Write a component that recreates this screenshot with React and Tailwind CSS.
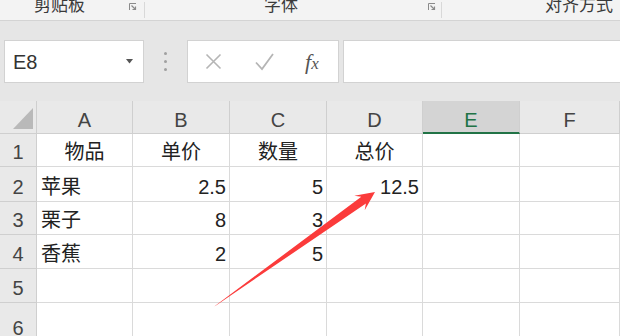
const font = "font-['Liberation_Sans','Noto_Sans_CJK_SC',sans-serif]";

const columns = ["A", "B", "C", "D", "E", "F"];
const rowHeights = ["h-[33px]", "h-[35px]", "h-[33px]", "h-[34px]", "h-[34px]", "h-[40px]"];

// [text, align] per cell
const rows = [
  [["物品", "c"], ["单价", "c"], ["数量", "c"], ["总价", "c"], null, null],
  [["苹果", "l"], ["2.5", "r"], ["5", "r"], ["12.5", "r"], null, null],
  [["栗子", "l"], ["8", "r"], ["3", "r"], null, null, null],
  [["香蕉", "l"], ["2", "r"], ["5", "r"], null, null, null],
  [null, null, null, null, null, null],
  [null, null, null, null, null, null],
];

const alignClass = { l: "justify-start pl-[4px]", c: "justify-center", r: "justify-end pr-[3px]" };

function Launcher() {
  return (
    <svg width="8" height="8" viewBox="0 0 8 8" className="text-[#8a8a8a]">
      <path d="M0.5 7V0.5H7" fill="none" stroke="currentColor" strokeWidth="1" />
      <path d="M2.5 2.5L6.5 6.5M6.5 3.5v3h-3" fill="none" stroke="currentColor" strokeWidth="1.2" />
    </svg>
  );
}

function Ribbon() {
  return (
    <div className="flex h-[21px] overflow-hidden border-b border-[#d4d4d4] bg-[#f3f3f3] text-[17px] leading-[17px] text-[#3a3a3a]">
      <div className="flex w-[144px] items-start">
        <span className="-mt-[3px] pl-[34px]">剪贴板</span>
        <span className="ml-auto mr-[7px] mt-[3px]"><Launcher /></span>
      </div>
      <div className="my-[2px] w-px bg-[#d8d8d8]" />
      <div className="flex w-[296px] items-start">
        <span className="-mt-[3px] pl-[119px]">字体</span>
        <span className="ml-auto mr-[5px] mt-[3px]"><Launcher /></span>
      </div>
      <div className="my-[2px] w-px bg-[#d8d8d8]" />
      <div className="flex flex-1 items-start">
        <span className="-mt-[3px] whitespace-nowrap pl-[103px]">对齐方式</span>
      </div>
    </div>
  );
}

function FormulaBar() {
  return (
    <div className="flex h-[80px] items-start bg-[#e6e6e6] pt-[19px]">
      <div className="ml-[4px] flex h-[43px] w-[140px] items-center border border-[#d2d2d2] bg-white pl-[8px] pr-[10px]">
        <span className="text-[20px] leading-none text-[#333]">E8</span>
        <svg width="7" height="5" viewBox="0 0 7 5" className="ml-auto">
          <path d="M0 0h7L3.5 4.5z" fill="#555" />
        </svg>
      </div>
      <div className="flex h-[43px] w-[43px] flex-col items-center justify-center gap-[5px]">
        <span className="h-[3px] w-[3px] rounded-full bg-[#a0a0a0]" />
        <span className="h-[3px] w-[3px] rounded-full bg-[#a0a0a0]" />
        <span className="h-[3px] w-[3px] rounded-full bg-[#a0a0a0]" />
      </div>
      <div className="flex h-[43px] w-[152px] items-center border border-[#d2d2d2] bg-white">
        <svg width="17" height="17" viewBox="0 0 17 17" className="ml-[17px]">
          <path d="M1.5 1.5L15.5 15.5M15.5 1.5L1.5 15.5" stroke="#b5b5b5" strokeWidth="1.6" fill="none" />
        </svg>
        <svg width="19" height="18" viewBox="0 0 19 18" className="ml-[33px]">
          <path d="M1 9.5L7 16L18 1" stroke="#b5b5b5" strokeWidth="1.8" fill="none" />
        </svg>
        <span className="ml-[31px] font-['Liberation_Serif',serif] text-[22px] italic leading-none text-[#555]">
          f<span className="text-[17px]">x</span>
        </span>
      </div>
      <div className="ml-[4px] h-[43px] flex-1 border border-r-0 border-[#d2d2d2] bg-white" />
    </div>
  );
}

function Grid() {
  return (
    <div className="grid grid-cols-[37px_96px_97px_97px_96px_97px_1fr] text-[20px] leading-[24px]">
      <div className="flex h-[33px] items-end justify-end border-r border-b border-[#cfcfcf] bg-[#e9e9e9] pb-[4px] pr-[3px]">
        <svg width="20" height="21" viewBox="0 0 20 21">
          <path d="M20 0V21H0z" fill="#b9b9b9" />
        </svg>
      </div>
      {columns.map((col) => (
        <div
          key={col}
          className={
            col === "E"
              ? "flex h-[33px] items-end justify-center border-r border-b-2 border-r-[#cfcfcf] border-b-[#217346] bg-[#d4d4d4] text-[#217346]"
              : "flex h-[33px] items-end justify-center border-r border-b border-[#cfcfcf] bg-[#e9e9e9] pb-[1px] text-[#444]"
          }
        >
          {col}
        </div>
      ))}
      {rows.map((cells, r) => (
        <div key={r} className="contents">
          <div className={`flex ${rowHeights[r]} items-end justify-center border-r border-b border-[#cfcfcf] bg-[#e9e9e9] pb-[2px] text-[#444]`}>
            {r + 1}
          </div>
          {cells.map((cell, c) => (
            <div
              key={c}
              className={`flex ${rowHeights[r]} items-end border-r border-b border-[#dadada] pb-[2px] text-[#222] ${cell ? alignClass[cell[1]] : ""}`}
            >
              {cell ? cell[0] : ""}
            </div>
          ))}
        </div>
      ))}
    </div>
  );
}

function Arrow() {
  return (
    <svg className="pointer-events-none absolute left-0 top-0" width="620" height="336" viewBox="0 0 620 336">
      <polygon
        points="214.5,306.5 365.9,203.4 364.7,210.3 375,192 354.3,195.7 361.3,196.8 215.5,305.5"
        fill="#fb3b3b"
      />
    </svg>
  );
}

export default function App() {
  return (
    <div className={`relative h-[336px] w-[620px] overflow-hidden bg-white ${font}`}>
      <Ribbon />
      <FormulaBar />
      <Grid />
      <Arrow />
    </div>
  );
}
